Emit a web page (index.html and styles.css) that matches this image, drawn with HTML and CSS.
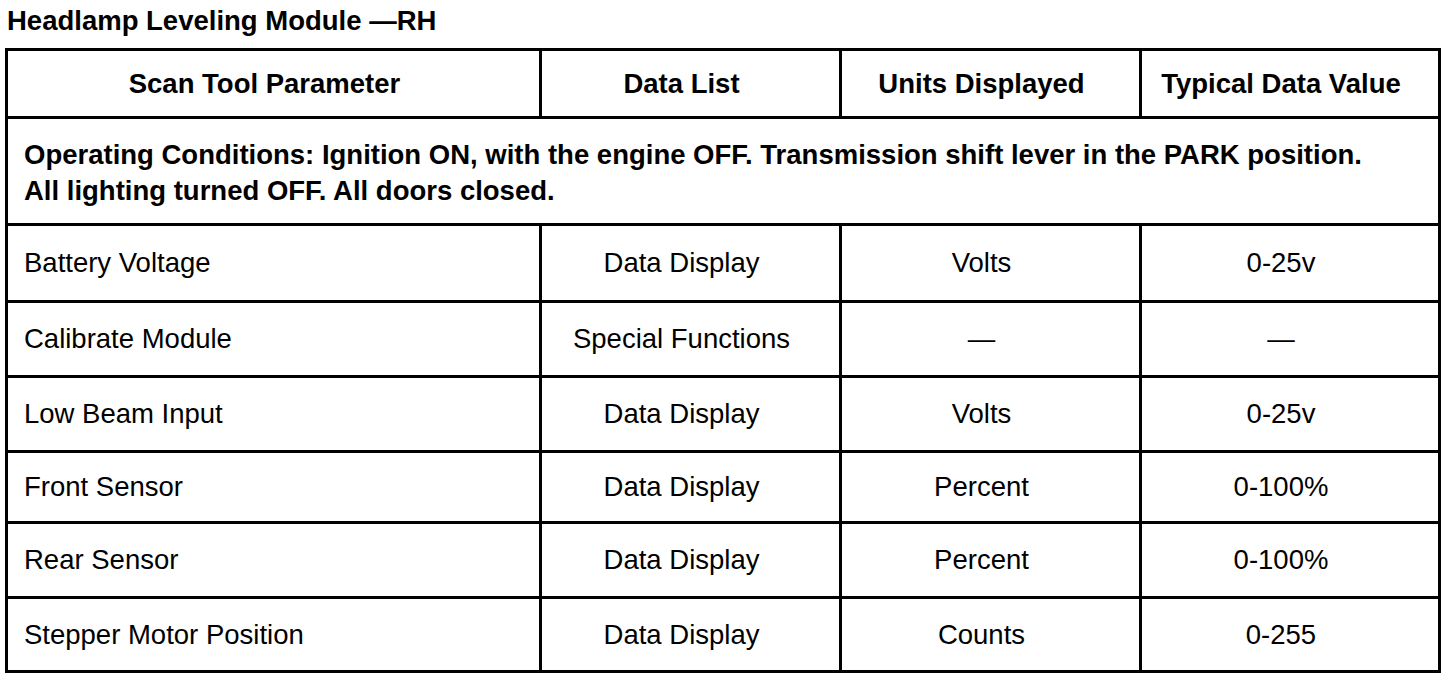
FILE: index.html
```html
<!DOCTYPE html>
<html>
<head>
<meta charset="utf-8">
<link rel="stylesheet" href="styles.css">
</head>
<body>
<div class="page">
  <h1 class="title">Headlamp Leveling Module —RH</h1>
  <div class="grid">
    <div class="cell head">Scan Tool Parameter</div>
    <div class="cell head">Data List</div>
    <div class="cell head">Units Displayed</div>
    <div class="cell head">Typical Data Value</div>

    <div class="cell cond">Operating Conditions: Ignition ON, with the engine OFF. Transmission shift lever in the PARK position.<br>All lighting turned OFF. All doors closed.</div>

    <div class="cell name">Battery Voltage</div>
    <div class="cell mid">Data Display</div>
    <div class="cell mid">Volts</div>
    <div class="cell mid">0-25v</div>

    <div class="cell name">Calibrate Module</div>
    <div class="cell mid">Special Functions</div>
    <div class="cell mid">—</div>
    <div class="cell mid">—</div>

    <div class="cell name">Low Beam Input</div>
    <div class="cell mid">Data Display</div>
    <div class="cell mid">Volts</div>
    <div class="cell mid">0-25v</div>

    <div class="cell name">Front Sensor</div>
    <div class="cell mid">Data Display</div>
    <div class="cell mid">Percent</div>
    <div class="cell mid">0-100%</div>

    <div class="cell name">Rear Sensor</div>
    <div class="cell mid">Data Display</div>
    <div class="cell mid">Percent</div>
    <div class="cell mid">0-100%</div>

    <div class="cell name">Stepper Motor Position</div>
    <div class="cell mid">Data Display</div>
    <div class="cell mid">Counts</div>
    <div class="cell mid">0-255</div>
  </div>
</div>
</body>
</html>
```

FILE: styles.css
```css
* { box-sizing: border-box; }
html, body {
  margin: 0;
  padding: 0;
  background: #fff;
  color: #000;
  font-family: "Liberation Sans", Arial, sans-serif;
}
.page {
  padding-left: 5px;
}
.title {
  margin: 0;
  padding: 0 0 6px 2px;
  font-size: 27.5px;
  line-height: 42px;
  font-weight: bold;
  white-space: nowrap;
}
.grid {
  display: grid;
  width: 1436px;
  grid-template-columns: 534px 300px 300px 299px;
  grid-template-rows: 68px 107px 77px 75px 75px 71px 75px 74px;
  border-left: 3px solid #000;
  border-top: 3px solid #000;
}
.cell {
  border-right: 3px solid #000;
  border-bottom: 3px solid #000;
  display: flex;
  align-items: center;
  font-size: 27.5px;
  line-height: 36px;
  white-space: nowrap;
}
.head {
  font-weight: bold;
  justify-content: center;
  padding: 0 18px 0 0;
}
.cond {
  grid-column: 1 / 5;
  font-weight: bold;
  padding: 4px 0 0 16px;
}
.name {
  padding-left: 16px;
}
.mid {
  justify-content: center;
  padding-right: 18px;
}
```
